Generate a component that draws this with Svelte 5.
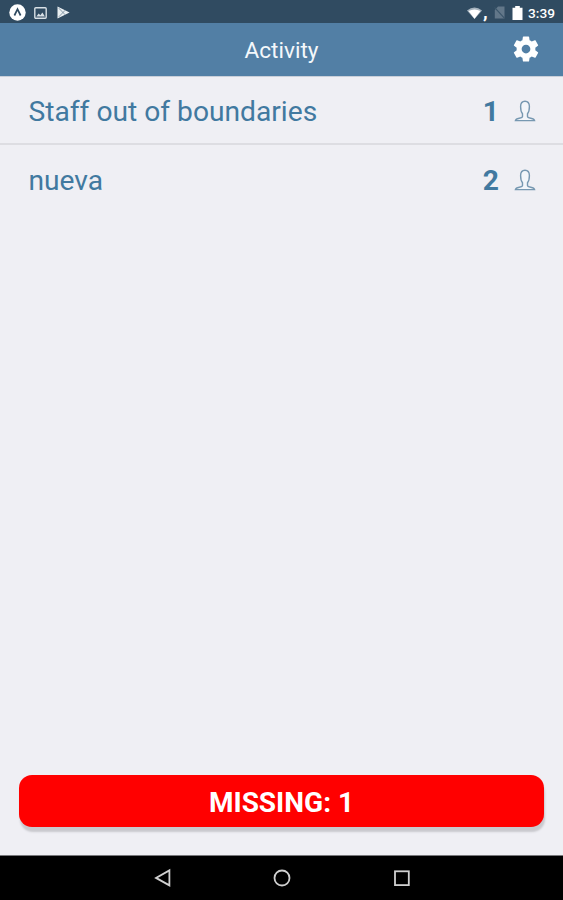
<script>
  const groups = [
    { name: 'Staff out of boundaries', count: 1 },
    { name: 'nueva', count: 2 },
  ];
</script>

<div class="screen">
  <div class="status">
    <svg class="app" width="17" height="17" viewBox="0 0 17 17">
      <circle cx="8.5" cy="8.5" r="8.2" fill="#fff" />
      <path d="M5.4 11.5 8.5 5.2l3.1 6.3" fill="none" stroke="#304b61" stroke-width="1.7" />
    </svg>
    <svg class="photo" width="13" height="12" viewBox="0 0 13 12">
      <rect x=".8" y=".8" width="11.4" height="10.4" rx="1" fill="none" stroke="#d8e0e6" stroke-width="1.4" />
      <path d="M2.3 9.5 4.7 6.4l1.6 1.8 2.1-2.7 2.5 4z" fill="#d8e0e6" />
    </svg>
    <svg class="play" width="13" height="13" viewBox="0 0 13 13">
      <path d="M.5.5 12.6 6.5.5 12.5z" fill="#e9eff2" />
      <path d="M1.8 2.2 8.2 8.8M1.8 10.8 8.2 4.2" stroke="#718798" stroke-width=".8" />
    </svg>
    <span class="grow"></span>
    <svg class="wifi" width="15" height="12" viewBox="0 0 15 12">
      <path d="M0 3.4Q7.5-2.4 15 3.4L7.5 12z" fill="#a6b3be" />
      <path d="M1.6 4Q7.5 1 13.4 4L7.5 11.7z" fill="#fff" />
    </svg>
    <span class="comma">,</span>
    <svg class="sim" width="11" height="13" viewBox="0 0 11 13">
      <path d="M4 .5h6.5v12H.8V4z" fill="#627789" />
      <path d="M.5 1.3 10.6 12.5" stroke="#3a556a" stroke-width="1.1" />
    </svg>
    <svg class="battery" width="11" height="14" viewBox="0 0 11 14">
      <path d="M3.2 0h4.6v1.7h2.7V14H.5V1.7h2.7z" fill="#fff" />
    </svg>
    <span class="time">3:39</span>
  </div>

  <header>
    <h1>Activity</h1>
    <svg class="gear" width="30" height="30" viewBox="0 0 24 24">
      <path fill="#fff" d="M19.43 12.98c.04-.32.07-.64.07-.98s-.03-.66-.07-.98l2.11-1.65c.19-.15.24-.42.12-.64l-2-3.46c-.12-.22-.39-.3-.61-.22l-2.49 1c-.52-.4-1.08-.73-1.69-.98l-.38-2.65C14.46 2.18 14.25 2 14 2h-4c-.25 0-.46.18-.49.42l-.38 2.65c-.61.25-1.17.59-1.69.98l-2.49-1c-.23-.09-.49 0-.61.22l-2 3.46c-.13.22-.07.49.12.64l2.11 1.65c-.04.32-.07.65-.07.98s.03.66.07.98l-2.11 1.65c-.19.15-.24.42-.12.64l2 3.46c.12.22.39.3.61.22l2.49-1c.52.4 1.08.73 1.69.98l.38 2.65c.03.24.24.42.49.42h4c.25 0 .46-.18.49-.42l.38-2.65c.61-.25 1.17-.59 1.69-.98l2.49 1c.23.09.49 0 .61-.22l2-3.46c.12-.22.07-.49-.12-.64l-2.11-1.65zM12 15.5c-1.93 0-3.5-1.57-3.5-3.5s1.57-3.5 3.5-3.5 3.5 1.57 3.5 3.5-1.57 3.5-3.5 3.5z" />
    </svg>
  </header>

  <main>
    {#each groups as group}
      <div class="row">
        <span class="name">{group.name}</span>
        <span class="count">{group.count}</span>
        <svg class="person" width="22" height="22" viewBox="0 0 22 22">
          <path d="M8.5 13.8C7 12 6.6 9.5 6.6 6.5 6.6 3 8.2 1.2 11 1.2s4.4 1.8 4.4 5.3c0 3-.4 5.5-1.9 7.3v2.6c0 1.2 1.4 1.5 3.3 1.9 2 .4 3.5 1 3.8 2.3H1.4c.3-1.3 1.8-1.9 3.8-2.3 1.9-.4 3.3-.7 3.3-1.9z" fill="#f2f5f9" stroke="#7798b1" stroke-width="1.4" />
        </svg>
      </div>
    {/each}
  </main>

  <button>MISSING: 1</button>

  <nav>
    <svg width="20" height="20" viewBox="0 0 20 20"><path d="M17.4 2.4v15L4 9.9z" /></svg>
    <svg width="20" height="20" viewBox="0 0 20 20"><circle cx="10" cy="10" r="7.5" /></svg>
    <svg width="20" height="20" viewBox="0 0 20 20"><rect x="3" y="3.3" width="13.8" height="13.8" /></svg>
  </nav>
</div>

<style>
  :global(body) {
    margin: 0;
  }
  .screen {
    width: 100%;
    height: 900px;
    display: flex;
    flex-direction: column;
    overflow: hidden;
    background: #efeff4;
    font-family: Roboto, sans-serif;
  }
  .status {
    height: 23px;
    flex: none;
    display: flex;
    align-items: center;
    box-sizing: border-box;
    padding: 2px 8px 0 9px;
    background: #304b61;
    color: #fff;
  }
  svg {
    display: block;
    flex: none;
  }
  .photo {
    margin-left: 8px;
  }
  .play {
    margin-left: 10px;
  }
  .grow {
    flex: 1;
  }
  .comma {
    width: 8px;
    margin: 0 3px 2px 1px;
    font-size: 19px;
    line-height: 18px;
    font-weight: 700;
  }
  .battery {
    margin-left: 7px;
  }
  .time {
    width: 27px;
    margin-left: 5px;
    font-size: 13.7px;
    line-height: 18px;
    font-weight: 500;
    white-space: nowrap;
  }
  header {
    height: 54px;
    flex: none;
    display: grid;
    grid-template-columns: 1fr auto 1fr;
    align-items: center;
    background: #527fa5;
    border-bottom: 1px solid #c9cfd9;
    box-sizing: border-box;
  }
  h1 {
    grid-column: 2;
    margin: 3px 0 0;
    font-size: 22.6px;
    line-height: 28px;
    font-weight: 400;
    color: #f4f8fb;
  }
  .gear {
    justify-self: end;
    margin: 0 22px 1px 0;
  }
  main {
    flex: 1;
  }
  .row {
    height: 68px;
    display: flex;
    align-items: center;
    box-sizing: border-box;
    padding: 3px 27px 0 28.5px;
    color: #4179a0;
  }
  .row:not(:last-child) {
    border-bottom: 2px solid #dddde2;
  }
  .row:last-child {
    height: 70px;
    padding-top: 1px;
  }
  .name {
    flex: 1;
    font-size: 28.2px;
    line-height: 34px;
  }
  .count {
    margin-right: 15px;
    font-size: 28.2px;
    line-height: 34px;
    font-weight: 700;
  }
  .person {
    margin-bottom: 1px;
  }
  button {
    flex: none;
    height: 52px;
    margin: 0 19px 28px;
    padding: 4px 0 0;
    border: 0;
    border-radius: 13px;
    background: #f00;
    box-shadow: 1px 5px 2px #c9c9ce;
    color: #fff;
    font: 700 28px/34px Roboto, sans-serif;
  }
  nav {
    height: 45px;
    flex: none;
    display: flex;
    align-items: center;
    justify-content: center;
    gap: 100px;
    box-sizing: border-box;
    border-top: 1px solid #77777a;
    background: #000;
  }
  nav path,
  nav circle,
  nav rect {
    fill: none;
    stroke: #d0d0d0;
    stroke-width: 1.8;
  }
</style>
